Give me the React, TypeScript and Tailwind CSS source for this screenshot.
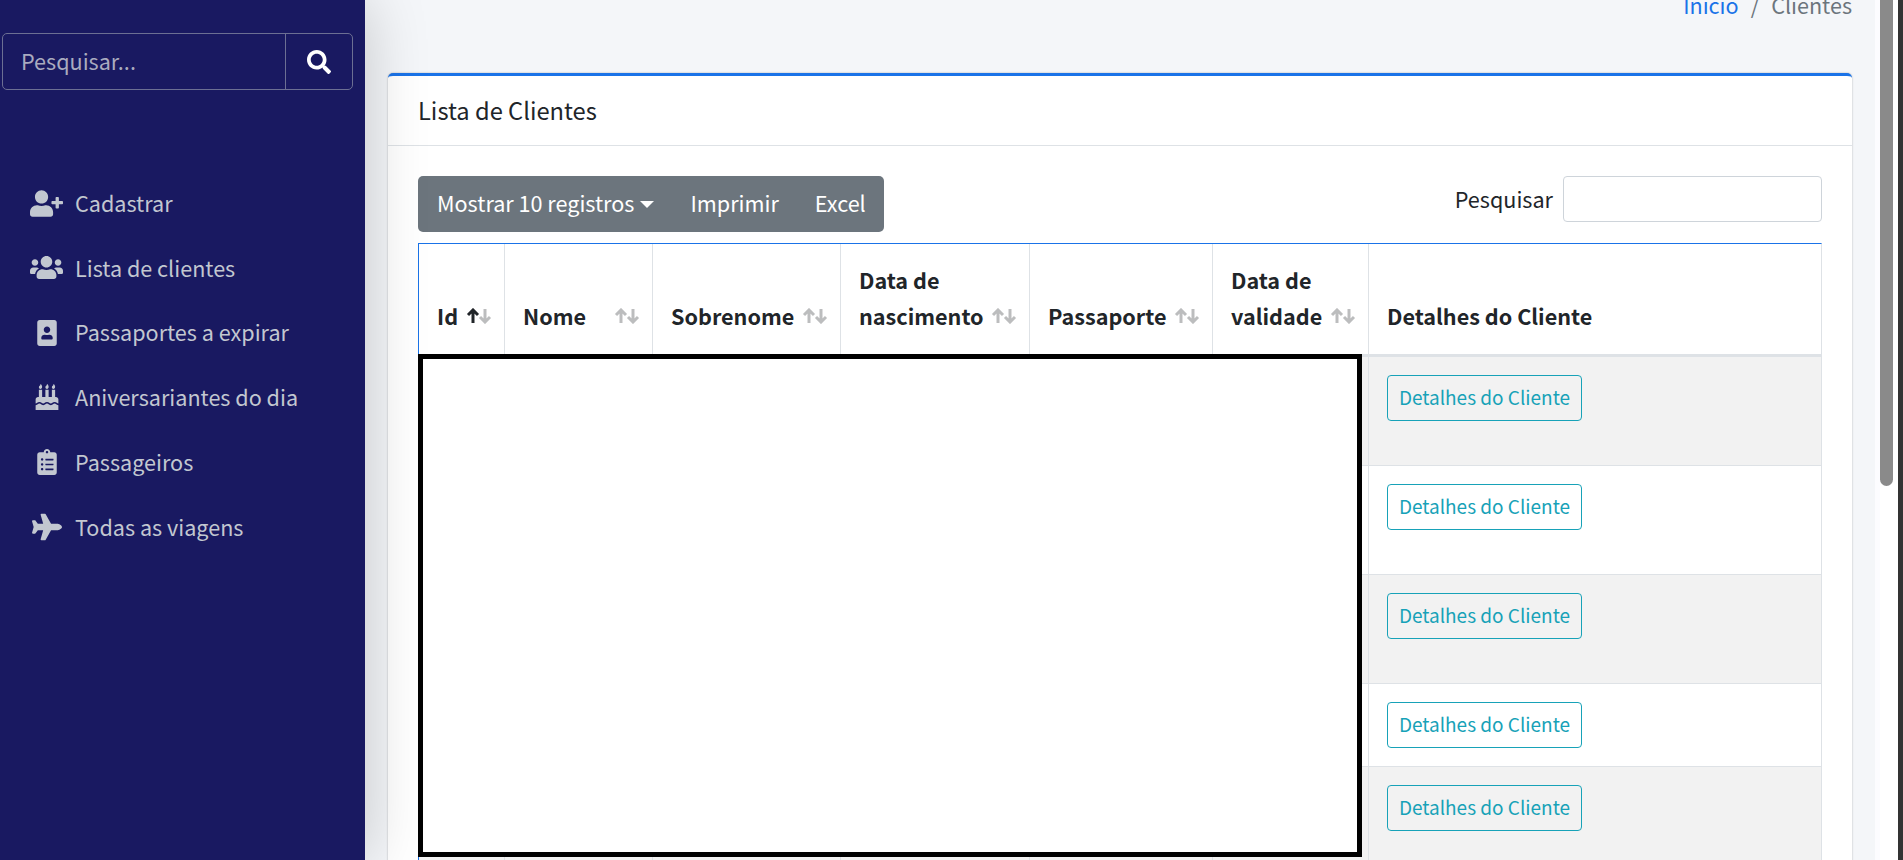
import {
  FaBirthdayCake,
  FaClipboardList,
  FaPlane,
  FaPortrait,
  FaSearch,
  FaUserPlus,
  FaUsers,
} from "react-icons/fa";

const font = "font-['Noto_Sans_CJK_SC','Source_Sans_Pro',sans-serif]";

const menu = [
  { label: "Cadastrar", icon: FaUserPlus, size: "text-[33px]" },
  { label: "Lista de clientes", icon: FaUsers, size: "text-[33px]" },
  { label: "Passaportes a expirar", icon: FaPortrait, size: "text-[26px]" },
  { label: "Aniversariantes do dia", icon: FaBirthdayCake, size: "text-[26px]" },
  { label: "Passageiros", icon: FaClipboardList, size: "text-[26px]" },
  { label: "Todas as viagens", icon: FaPlane, size: "text-[30px]" },
];

const columns = [
  { label: ["Id"], width: "w-[86px]", active: true },
  { label: ["Nome"], width: "w-[148px]" },
  { label: ["Sobrenome"], width: "w-[188px]" },
  { label: ["Data de", "nascimento"], width: "w-[189px]" },
  { label: ["Passaporte"], width: "w-[183px]" },
  { label: ["Data de", "validade"], width: "w-[156px]" },
];

const rows = [
  { height: "h-[109px]", bg: "bg-[#f2f2f2]" },
  { height: "h-[109px]", bg: "bg-white" },
  { height: "h-[109px]", bg: "bg-[#f2f2f2]" },
  { height: "h-[83px]", bg: "bg-white" },
  { height: "h-[109px]", bg: "bg-[#f2f2f2]" },
];

const SortArrows = ({ active }: { active?: boolean }) => (
  <svg
    viewBox="0 0 26 16"
    className="absolute right-[12px] bottom-[30px] h-[16px] w-[26px] fill-none stroke-[3]"
  >
    <path
      d="M7 15V2M2 7l5-5 5 5"
      className={active ? "stroke-[#212529]" : "stroke-[#212529] opacity-30"}
    />
    <path d="M19 1v13M14 9l5 5 5-5" className="stroke-[#212529] opacity-30" />
  </svg>
);

const Sidebar = () => (
  <aside className="z-10 flex w-[365px] shrink-0 flex-col bg-[#191961] shadow-[0_0_60px_rgba(0,0,0,0.2)]">
    <div className="mt-[33px] ml-[2px] flex h-[57px] w-[351px] rounded-[5px] border border-[#6c6f93]">
      <input
        placeholder="Pesquisar..."
        className="w-[283px] border-r border-[#6c6f93] bg-transparent pl-[18px] text-[21.6px] text-white outline-none placeholder:text-[#a9abbf]"
      />
      <div className="flex flex-1 items-center justify-center text-[24px] text-white">
        <FaSearch />
      </div>
    </div>
    <nav className="mt-[93px] flex flex-col gap-[24.8px]">
      {menu.map(({ label, icon: Icon, size }) => (
        <a key={label} className="flex h-[40px] items-center text-[21.6px] text-[#c2c7d0]">
          <span className={`flex w-[75px] shrink-0 items-center justify-center pl-[18px] ${size}`}>
            <Icon />
          </span>
          {label}
        </a>
      ))}
    </nav>
  </aside>
);

const ClientTable = () => (
  <div className="relative mt-[11px]">
    <table className="w-[1404px] table-fixed border-separate border-spacing-0 border-t border-r border-l border-t-[#1a73e8] border-r-[#dee2e6] border-l-[#1a73e8] text-[#212529]">
      <thead>
        <tr>
          {columns.map(({ label, width, active }) => (
            <th
              key={label[0]}
              className={`relative h-[113px] ${width} border-r border-b-[3px] border-r-[#dee2e6] border-b-[#dee2e6] px-[18px] pb-[20px] text-left align-bottom text-[21.6px] leading-[36px] font-bold`}
            >
              {label.map((line) => (
                <div key={line}>{line}</div>
              ))}
              <SortArrows active={active} />
            </th>
          ))}
          <th className="h-[113px] border-b-[3px] border-b-[#dee2e6] px-[18px] pb-[20px] text-left align-bottom text-[21.6px] leading-[36px] font-bold">
            Detalhes do Cliente
          </th>
        </tr>
      </thead>
      <tbody>
        {rows.map(({ height, bg }, i) => (
          <tr key={i} className={bg}>
            {columns.map(({ label }) => (
              <td key={label[0]} className={`${height} border-r border-b border-[#dee2e6]`} />
            ))}
            <td className={`${height} border-b border-[#dee2e6] px-[18px] pt-[18px] align-top`}>
              <button className="h-[46px] w-[195px] rounded-[4px] border border-[#17a2b8] pb-[1px] text-[19px] text-[#17a2b8]">
                Detalhes do Cliente
              </button>
            </td>
          </tr>
        ))}
      </tbody>
    </table>
    {/* tarja que cobre os dados dos clientes */}
    <div className="absolute top-[111px] left-0 h-[503px] w-[944px] border-[5px] border-black bg-white" />
  </div>
);

export default function App() {
  return (
    <div className={`flex h-[860px] overflow-hidden bg-[#f4f6f9] ${font}`}>
      <Sidebar />
      <main className="w-[1510px] shrink-0 overflow-hidden pl-[23px]">
        <div className="-mt-[12px] flex h-[85px] w-[1464px] justify-end text-[21.6px] leading-[34px]">
          <a className="text-[#1a73e8]">Início</a>
          <span className="px-[12px] text-[#6c757d]">/</span>
          <span className="text-[#6c757d]">Clientes</span>
        </div>
        <section className="h-[900px] w-[1464px] rounded-t-[5px] border-t-[3px] border-[#1a73e8] bg-white shadow-[0_0_2px_rgba(0,0,0,0.3)]">
          <header className="flex h-[70px] items-center border-b border-[#dee2e6] px-[30px] text-[23.7px] text-[#212529]">
            Lista de Clientes
          </header>
          <div className="pt-[30px] pl-[30px]">
            <div className="flex h-[56px] w-[1404px] items-start justify-between">
              <div className="flex h-[56px] items-center rounded-[5px] bg-[#6c757d] pr-[18px] pb-[2px] pl-[19px] text-[21.6px] text-white">
                <span>Mostrar 10 registros</span>
                <span className="mt-[2px] ml-[6px] h-0 w-0 border-x-[7px] border-t-[7px] border-x-transparent border-t-white" />
                <span className="ml-[36px]">Imprimir</span>
                <span className="ml-[36px]">Excel</span>
              </div>
              <label className="flex items-center text-[21.6px] text-[#212529]">
                Pesquisar
                <input className="ml-[10px] h-[46px] w-[259px] rounded-[4px] border border-[#ced4da] bg-white" />
              </label>
            </div>
            <ClientTable />
          </div>
        </section>
      </main>
      <div className="w-[5px] shrink-0 bg-[#fcfcff]" />
      <div className="flex w-[23px] shrink-0 justify-between bg-white">
        <div className="h-[486px] w-[13px] rounded-b-[7px] bg-[#8a8a8a]" />
        <div className="w-[5px] bg-[#333333]" />
      </div>
    </div>
  );
}
